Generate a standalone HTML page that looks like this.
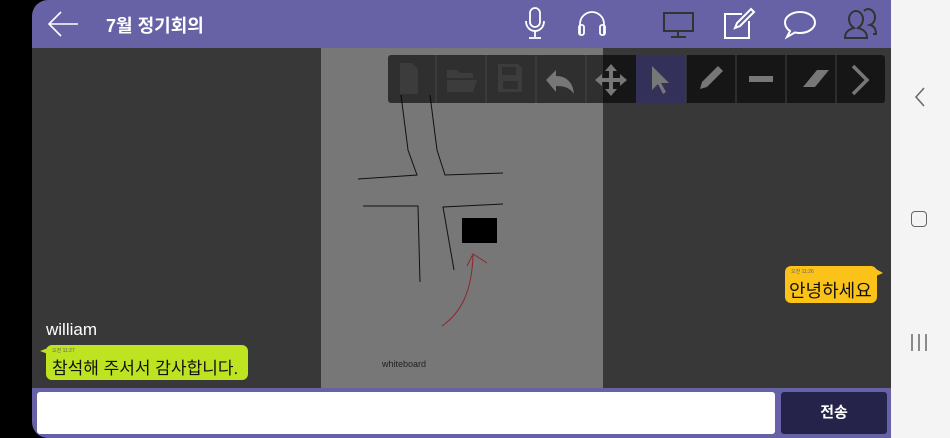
<!DOCTYPE html>
<html><head><meta charset="utf-8"><style>
*{margin:0;padding:0;box-sizing:border-box}
body{width:950px;height:438px;background:#000;position:relative;overflow:hidden;font-family:"Liberation Sans","Noto Sans CJK KR",sans-serif}
.app{position:absolute;left:32px;top:0;width:859px;height:438px;background:#6762a6;border-radius:16px 0 0 16px;overflow:hidden}
.nav{position:absolute;left:891px;top:0;width:59px;height:438px;background:#f4f4f4}
.content{position:absolute;left:0;top:48px;width:859px;height:340px;background:#383838}
.wb{position:absolute;left:289px;top:0;width:282px;height:340px;background:#777}
.title{position:absolute;left:74px;top:12px;color:#fff;font-weight:bold;font-size:18px}
.input{position:absolute;left:5px;top:392px;width:738px;height:42px;background:#fff;border-radius:3px}
.send{position:absolute;left:749px;top:392px;width:106px;height:42px;background:#25234a;border-radius:3px;color:#fff;font-weight:bold;font-size:15px;text-align:center;line-height:42px}
.bub{position:absolute;border-radius:6px;color:#111}
.bub small{position:absolute;left:6px;top:2px;font-size:5px;color:#666}
</style></head><body>
<div class="app">
  <svg style="position:absolute;left:14px;top:10px" width="34" height="28" viewBox="0 0 34 28"><path d="M32 14H3M15 2L3 14l12 12" fill="none" stroke="#fff" stroke-width="1.6"/></svg>
  <div class="title">7월 정기회의</div>
  <svg style="position:absolute;left:488px;top:6px" width="30" height="34" viewBox="0 0 30 34" fill="none" stroke="#fff" stroke-width="1.8"><rect x="10" y="2" width="10" height="19" rx="5"/><path d="M6 15c0 6 4 10 9 10s9-4 9-10M15 25v6M9 32h12"/></svg>
  <svg style="position:absolute;left:543px;top:8px" width="34" height="30" viewBox="0 0 34 30" fill="none" stroke="#fff" stroke-width="1.8"><path d="M5 26V16a12 12 0 0 1 24 0v10"/><rect x="4" y="17" width="5" height="10" rx="2"/><rect x="25" y="17" width="5" height="10" rx="2"/></svg>
  <svg style="position:absolute;left:630px;top:10px" width="34" height="30" viewBox="0 0 34 30" fill="none" stroke="#333" stroke-width="2"><rect x="2" y="3" width="29" height="18"/><path d="M16 21v5M9 27h15"/></svg>
  <svg style="position:absolute;left:690px;top:6px" width="34" height="34" viewBox="0 0 34 34" fill="none" stroke="#fff" stroke-width="2"><path d="M20 8H3v24h24V15"/><path d="M29 3l3 3-14 14-5 2 2-5z"/></svg>
  <svg style="position:absolute;left:750px;top:8px" width="36" height="32" viewBox="0 0 36 32" fill="none" stroke="#fff" stroke-width="2"><path d="M18 4c8 0 15 4.5 15 10.5S26 25 18 25c-2 0-4-.3-5-.6L5 29l3-6c-3-2-5-5-5-8.5C3 8.5 10 4 18 4z"/></svg>
  <svg style="position:absolute;left:810px;top:6px" width="36" height="34" viewBox="0 0 36 34" fill="none" stroke="#333" stroke-width="2"><path d="M3 32c0-7 5-9 9-10-3-2-5-5-5-9 0-4 3-8 7-8s7 4 7 8c0 4-2 7-5 9 4 1 9 3 9 10z"/><path d="M22 5c1-1 3-2 4-2 4 0 7 4 7 8 0 4-2 7-5 8 4 1 6 4 6 9h-3"/></svg>
  <div class="content">
    <div class="wb"></div>
    <svg style="position:absolute;left:0;top:0" width="859" height="340" viewBox="32 48 859 340" fill="none">
      <g stroke="#111" stroke-width="1">
        <path d="M401 95L408 150L417 175L358 179"/>
        <path d="M430 95L437 150L445 175L503 173"/>
        <path d="M363 206L418 206L420 282"/>
        <path d="M503 204L443 207L454 270"/>
      </g>
      <rect x="462" y="218" width="35" height="25" fill="#000"/>
      <path d="M442 326C462 312 472 290 473 255M467 266L473 254L487 263" stroke="#8a2a2a" stroke-width="1"/>
      <rect x="388" y="55" width="497" height="48" rx="3" fill="rgba(0,0,0,0.6)"/>
      <rect x="636" y="55" width="50" height="48" fill="#33305a"/>
      <g stroke="#444" stroke-width="1"><path d="M436 55v48M486 55v48M536 55v48M586 55v48M686 55v48M736 55v48M786 55v48M836 55v48"/></g>
      <g fill="#3c3c3c">
        <path d="M400 63h12l6 6v25h-18z"/>
        <path d="M447 70h10l3 3h13v5h-26zM447 80h30l-4 12h-26z"/>
        <path d="M498 64h20l4 4v24h-24zM502 67v8h14v-8zM503 81h15v8h-15z" fill-rule="evenodd"/>
      </g>
      <g fill="#777">
        <path d="M546 80l10-10v6c10 0 17 6 18 18-4-6-9-8-18-8v6z"/>
        <path d="M611 64l6 7h-4v7h7v-4l7 6-7 6v-4h-7v7h4l-6 7-6-7h4v-7h-7v4l-7-6 7-6v4h7v-7h-4z"/>
        <path d="M652 66v24l6-6 5 10 3-2-5-9h8z"/>
        <path d="M718 66l5 5-16 16-7 2 2-7z"/>
        <rect x="749" y="76" width="24" height="6"/>
        <path d="M803 87l14-17h12l-14 17z"/>
      </g>
      <path d="M853 66l14 14-14 14" stroke="#777" stroke-width="3.5"/>
    </svg>
    <div style="position:absolute;left:350px;top:311px;font-size:9px;color:#222">whiteboard</div>
    <div style="position:absolute;left:14px;top:272px;font-size:17px;color:#fff">william</div>
    <div class="bub" style="left:14px;top:297px;width:202px;height:35px;background:#bee320"><small>오전 11:27</small><span style="position:absolute;left:6px;top:9px;font-size:17px">참석해 주서서 감사합니다.</span></div>
    <svg style="position:absolute;left:8px;top:300px" width="8" height="6"><path d="M8 0L0 3L8 6z" fill="#bee320"/></svg>
    <div class="bub" style="left:753px;top:218px;width:92px;height:37px;background:#fbc21a"><small>오전 11:26</small><span style="position:absolute;left:4px;top:11px;font-size:18px">안녕하세요</span></div>
    <svg style="position:absolute;left:844px;top:221px" width="7" height="7"><path d="M0 0L7 4L0 7z" fill="#fbc21a"/></svg>
  </div>
  <div class="input" style="left:5px"></div>
  <div class="send" style="left:749px">전송</div>
</div>
<div class="nav">
  <svg style="position:absolute;left:22px;top:86px" width="14" height="22"><path d="M11 2L3 11l8 9" fill="none" stroke="#666" stroke-width="1.5"/></svg>
  <div style="position:absolute;left:20px;top:211px;width:16px;height:16px;border:1.5px solid #666;border-radius:4px"></div>
  <svg style="position:absolute;left:18px;top:333px" width="22" height="20"><path d="M3 1v17M10 1v17M17 1v17" stroke="#666" stroke-width="1.5"/></svg>
</div>
</body></html>
